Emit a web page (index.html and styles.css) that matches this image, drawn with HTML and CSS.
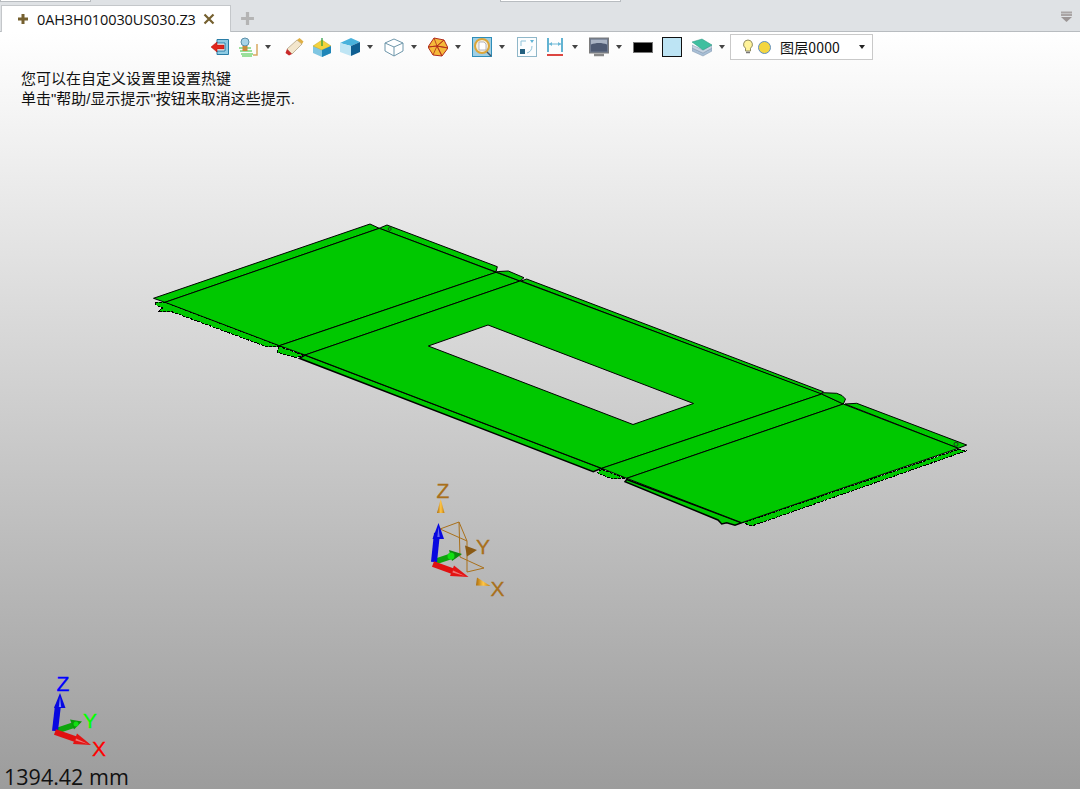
FILE: index.html
```html
<!DOCTYPE html>
<html lang="zh-CN">
<head>
<meta charset="utf-8">
<title>0AH3H010030US030.Z3</title>
<link rel="stylesheet" href="styles.css">
</head>
<body>
<div class="app">
  <header class="tabbar">
    <span class="sliver sliver-a"></span>
    <span class="sliver sliver-b"></span>
    <div class="tab">
      <svg class="tab-glyph" viewBox="0 0 12 12"><path d="M6 1v10M1 6h10" stroke="#75602f" stroke-width="3"/></svg>
      <span class="tab-name">0AH3H010030US030.Z3</span>
      <svg class="tab-glyph" viewBox="0 0 12 12"><path d="M1.5 1.5l9 9M10.500 1.500l-9 9" stroke="#75602f" stroke-width="2.200"/></svg>
    </div>
    <svg class="tab-add" viewBox="0 0 14 14"><path d="M7 1v12M1 7h12" stroke="#b4b4b4" stroke-width="3"/></svg>
    <svg class="tab-menu" viewBox="0 0 12 12"><path d="M0 1.500h11M0 4h11" stroke="#aaa5a5" stroke-width="2"/><path d="M0 6h11L5.500 11z" fill="#9c9696"/></svg>
  </header>

  <main class="viewport">
    <svg class="scene" viewBox="0 32 1080 757">
      <defs>
        <linearGradient id="cone" x1="0" y1="0" x2="1" y2="0"><stop offset="0" stop-color="#a96a0a"/><stop offset=".5" stop-color="#ffc648"/><stop offset="1" stop-color="#c07c10"/></linearGradient>
      </defs>
      <g class="model">
        <polygon points="153.500,298.300 370,224 379.300,228.300 165,302.300"/>
        <polygon points="380.500,227.700 387,225 497.300,266.700 496,272 379.300,228.300"/>
        <polygon class="rough" points="155,302.500 165,302.300 279.300,345.700 278,346.700 266.700,346.700 171.700,311.700 158.300,311.700 162.500,308 156,305"/>
        <polygon points="165,302.300 379.300,228.300 496,272.300 279.300,345.700"/>
        <polygon points="279.300,345.700 496,272.300 520,281 305,355"/>
        <polygon points="496.500,272 498.300,271.500 508.300,271 524,277.700 520,281"/>
        <polygon class="rough" points="279.300,346.500 277.300,352.300 296.700,357.700 303,355"/>
        <polygon points="521,281 526.700,279 823.300,391.700 820.700,394"/>
        <polygon class="thick" points="305,355 601.700,468.300 593.300,471.700 299.300,358.300"/>
        <path class="panel" fill-rule="evenodd" d="M305 355L520 281L821.700 394L601.700 468.300ZM428.300 346L488 325L693.500 403.500L633 424.500Z"/>
        <polygon points="601.700,468.300 821.700,394 843.300,404 626.700,478.300"/>
        <polygon class="rough" points="601.700,469.300 597.300,472.700 611.700,479 625,478.300"/>
        <polygon points="821.700,394 823,392.700 836.700,393.300 842,395.500 845.500,399 843.300,404"/>
        <polygon points="845,404 856.700,403.300 966.700,445 958.300,448.300"/>
        <polygon class="rough" points="958.300,449.500 966.700,450.700 751.700,526 743,522.700"/>
        <polygon class="thick" points="626.700,479.500 625,481.700 718,520 721.700,524 726.700,522.700 735,525.300 741.700,522.700"/>
        <polygon points="626.700,478.300 843.300,404 958.300,448.300 741.700,522.700"/>
        <circle class="pin" cx="389.700" cy="229" r="1.500"/>
        <circle class="pin" cx="956" cy="444.300" r="2"/>
      </g>

      <g class="wire">
        <path d="M440 529L459 522L460 557L484 568L467 572L467 541L440 529M459 522L467 541"/>
      </g>
      <polygon points="440.700,499 437,513 444.500,513" fill="url(#cone)"/>
      <polygon points="477,550 465,545.500 467,556.500" fill="#8a5a14"/>
      <polygon points="490.500,586 477,577.500 476,585.500" fill="url(#cone)"/>
      <g class="axes">
        <path class="axis-y" d="M434 562L452 556"/><polygon points="462,554 449,550 452,561" fill="#0d8a0d"/><circle cx="451" cy="556" r="3.500" fill="#12e012"/>
        <path class="axis-z" d="M434 562L437 533"/><polygon points="438.500,523 432.500,539 444,539" fill="#0808e0"/><polygon points="438.500,527 437.300,537 439.700,537" fill="#6a6af0"/>
        <path class="axis-x" d="M433 564L455 572"/><polygon points="468.500,577 454,565.500 450,576" fill="#e41414"/><polygon points="465,576 453,570.500 452.500,572.500" fill="#f07878"/>
      </g>
      <text class="axis-label gold" x="436.500" y="498">Z</text>
      <text class="axis-label gold" x="476" y="554">Y</text>
      <text class="axis-label gold" x="490.500" y="596">X</text>

      <g class="axes">
        <path class="axis-y" d="M56 731L74 725"/><polygon points="82,721.500 70,719.500 74,729.500" fill="#0a9a0a"/><circle cx="76" cy="724" r="2.500" fill="#12e012"/>
        <path class="axis-z" d="M55 731L58 705"/><polygon points="60,693 54,708 65.500,708" fill="#0808e0"/><polygon points="60,697 58.800,707 61.200,707" fill="#7a8cf2"/>
        <path class="axis-x" d="M55 732L78 740"/><polygon points="91,745 77,733.500 73,744" fill="#e41414"/><polygon points="88,744 76,738.500 75.500,740.500" fill="#f07878"/>
      </g>
      <text class="axis-label blue" x="56.500" y="691">Z</text>
      <text class="axis-label lime" x="83" y="728">Y</text>
      <text class="axis-label red" x="92" y="756">X</text>
    </svg>

    <nav class="toolbar">
      <svg class="ico" viewBox="0 0 20 20"><path d="M7 2.500h11.500v15H7v-3.500h8V6H7z" fill="#8fcbe3" stroke="#2a7da6"/><path d="M1 10l6-5v3h7v4H7v3z" fill="#e1251b" stroke="#a81610" stroke-width=".5"/></svg>
      <svg class="ico" viewBox="0 0 20 20"><circle cx="7" cy="5" r="4" fill="#a7d3e8" stroke="#5b8fa8"/><path d="M1 11h12M2 14h12M3 17h12M4 19h10" stroke="#3bc43b" stroke-width="1.200"/><rect x="4.500" y="9" width="5" height="5" fill="#c98a3c"/><path d="M15 18h4V7" fill="none" stroke="#d9a860" stroke-width="1.500"/></svg>
      <span class="caret caret-tight"></span>
      <svg class="ico sp5" viewBox="0 0 20 20"><path d="M3 12l10-9 5 4-10 10z" fill="#f3e6cc" stroke="#a99a78" stroke-width=".7"/><path d="M13 3l2.500-2 4 3.500L18 7z" fill="#e0b044"/><path d="M3 12l5 5-3 1.500-3.500-2.500z" fill="#c92a2a"/></svg>
      <svg class="ico" viewBox="0 0 20 20"><path d="M10 5l9 4v7l-9 4-9-4V9z" fill="#7fc6e2"/><path d="M10 3l9 6-9 4-9-4z" fill="#f4d23c" stroke="#c9a92a" stroke-width=".5"/><path d="M10 13l9-4v7l-9 4z" fill="#1f86b8"/><path d="M10 9V1" stroke="#1f9a3c" stroke-width="1.200"/></svg>
      <svg class="ico" viewBox="0 0 20 20"><path d="M0 6l11-5 9 4-9 4z" fill="#49b2dc"/><path d="M0 6l11 3v10L0 15z" fill="#bfe5f4"/><path d="M11 9l9-4v10l-9 4z" fill="#0f5f92"/></svg>
      <span class="caret caret-tight"></span>
      <svg class="ico sp3" viewBox="0 0 20 20"><path d="M1 6l9-4 9 4v8l-9 5-9-5z" fill="#fff" stroke="#6f97ab"/><path d="M1 6l9 4 9-4M10 10v9" fill="none" stroke="#6f97ab"/></svg>
      <span class="caret caret-tight"></span>
      <svg class="ico sp3" viewBox="0 0 20 20"><path d="M6 1l10 2 4 8-6 8-9-1-5-8z" fill="#f5b93a" stroke="#b12a1c"/><path d="M6 1l3 8-9 1 9-1 7-6-7 6 11 2-11-2 5 10-5-10-4 9" fill="none" stroke="#b12a1c" stroke-width=".8"/></svg>
      <span class="caret caret-tight"></span>
      <svg class="ico sp3" viewBox="0 0 20 20"><rect x=".5" y=".5" width="19" height="19" fill="#9fcfe4" stroke="#2f8db8"/><circle cx="10" cy="9" r="7" fill="#f3eedd" stroke="#dca63a" stroke-width="2"/><path d="M7 5h5l2 2v6H7z" fill="#fff" stroke="#99a" stroke-width=".7"/><path d="M15 15l4 4" stroke="#456" stroke-width="1.500"/></svg>
      <span class="caret caret-tight"></span>
      <svg class="ico sp4" viewBox="0 0 20 20"><rect x=".5" y=".5" width="19" height="19" fill="#fbfdfe" stroke="#8fb7c9"/><path d="M4 9V4h5" fill="none" stroke="#8fc3da"/><path d="M15 9c0 4-2 6-5 7" fill="none" stroke="#8fc3da"/><rect x="3" y="12" width="5" height="5" fill="#24607f"/><path d="M13 3h4l-2 3z" fill="#5fb3d6"/></svg>
      <svg class="ico" viewBox="0 0 20 20"><path d="M3 1v14M17 1v14" stroke="#2f9ac4" stroke-width="1.500"/><path d="M4 7h12" stroke="#6cb8d6"/><path d="M4 7l3-2v4zM16 7l-3-2v4z" fill="#6cb8d6"/><path d="M2 18h16" stroke="#d8322c" stroke-width="1.800"/></svg>
      <span class="caret caret-tight"></span>
      <svg class="ico sp3" viewBox="0 0 20 20"><rect x=".5" y="1" width="19" height="15" fill="#6f7a8e" stroke="#7c7c7c"/><rect x="2" y="2.500" width="16" height="12" fill="#4e5a72"/><path d="M2 2.500h16v5c-5-2-11-2-16 0z" fill="#aab4c4"/><path d="M5 18h10" stroke="#888" stroke-width="2.500"/></svg>
      <span class="caret caret-tight"></span>
      <span class="swatch swatch-black sp3"></span>
      <span class="swatch swatch-sky"></span>
      <svg class="ico sp2" viewBox="0 0 20 20"><path d="M0 11l11 5 9-5v3l-9 5-11-5z" fill="#a8bfd6" stroke="#7d93aa" stroke-width=".5"/><path d="M0 8l11 5 9-5v3l-9 5-11-5z" fill="#c7d4e2" stroke="#7d93aa" stroke-width=".5"/><path d="M0 5l10-3 10 6-9 5z" fill="#3fbf9f" stroke="#2a9580" stroke-width=".5"/></svg>
      <span class="caret caret-tight"></span>
      <div class="layer-box">
        <svg class="bulb" viewBox="0 0 12 16"><path d="M6 1a4.500 4.500 0 0 0-2.500 8.200V12h5V9.200A4.500 4.500 0 0 0 6 1z" fill="#fff39a" stroke="#8e8a60"/><path d="M4 13.500h4" stroke="#777" stroke-width="1.500"/></svg>
        <span class="sun"></span>
        <span class="layer-name">图层0000</span>
        <span class="caret caret-box"></span>
      </div>
    </nav>

    <p class="hint">您可以在自定义设置里设置热键<br>单击"帮助/显示提示"按钮来取消这些提示.</p>
    <div class="scale">1394.42 mm</div>
  </main>
</div>
</body>
</html>
```
FILE: styles.css
```css
* { box-sizing: border-box; }
html, body { margin: 0; height: 100%; overflow: hidden; }
body { font-family: "Open Sans", "Noto Sans CJK SC", sans-serif; color: #111; background: #fff; }

.app { display: flex; flex-direction: column; width: 1080px; height: 789px; }

.tabbar {
  position: relative;
  display: flex;
  align-items: flex-end;
  flex: 0 0 32px;
  padding-left: 1px;
  background: #dfe2e5;
  border-bottom: 1px solid #b8bcc0;
}
.sliver { position: absolute; top: 0; height: 2px; background: #fff; border: 1px solid #b8bcc0; border-top: 0; }
.sliver-a { left: 0; width: 91px; }
.sliver-b { left: 500px; width: 121px; }

.tab {
  display: flex;
  align-items: center;
  width: 230px;
  height: 27px;
  margin-bottom: -1px;
  padding: 0 15px 0 15px;
  background: #fff;
  border: 1px solid #c4c7ca;
  border-bottom: 0;
}
.tab-glyph { flex: none; width: 12px; height: 12px; }
.tab-name { flex: 1; margin-left: 8px; font-size: 14.5px; letter-spacing: -.1px; white-space: nowrap; }
.tab-add { width: 15px; height: 15px; margin: 0 0 5px 9px; }
.tab-menu { width: 12px; height: 12px; margin: 0 7px 8px auto; }

.viewport {
  position: relative;
  flex: 1;
  background: linear-gradient(#fff, #9c9c9c);
}
.scene { position: absolute; inset: 0; width: 1080px; height: 757px; }

.model polygon, .model path { fill: #00c800; stroke: #000; stroke-width: 1; stroke-linejoin: miter; }
.model .rough { stroke-width: 1; stroke-dasharray: 3 1; shape-rendering: crispEdges; }
.model .thick { stroke-width: 1.500; }
.model .pin { fill: none; stroke: #222; stroke-width: .8; }

.wire path { fill: none; stroke: #a9701b; stroke-width: 1; }
.axes path { fill: none; stroke-width: 6; }
.axis-x { stroke: #e01010; }
.axis-y { stroke: #0ca50c; }
.axis-z { stroke: #0808e0; }

.axis-label { font-family: "Liberation Sans", sans-serif; font-size: 21px; stroke-width: .3px; }
.gold { fill: #a9701b; stroke: #a9701b; }
.blue { fill: #0000ff; stroke: #0000ff; }
.lime { fill: #00ff00; stroke: #00ff00; }
.red { fill: #ff0000; stroke: #ff0000; }

.toolbar {
  position: relative;
  display: flex;
  align-items: center;
  gap: 8px;
  height: 30px;
  padding-left: 210px;
}
.ico { flex: none; width: 20px; height: 20px; }
.sp2 { margin-left: 2px; }
.sp3 { margin-left: 3px; }
.sp4 { margin-left: 4px; }
.sp5 { margin-left: 5px; }

.caret { flex: none; width: 0; height: 0; border: 3px solid transparent; border-top: 4px solid #444; border-bottom: 0; }
.caret-tight { margin-left: -1px; }
.caret-box { margin-left: auto; border-top-color: #222; }

.swatch { flex: none; width: 20px; height: 20px; }
.swatch-black { height: 11px; background: #000; border: 1px solid #777; }
.swatch-sky { margin-left: 1px; background: #bde4f4; border: 1px solid #111; }

.layer-box {
  display: flex;
  align-items: center;
  flex: none;
  width: 143px;
  height: 26px;
  margin-left: -3px;
  padding: 0 7px 0 11px;
  background: #fff;
  border: 1px solid #c9c9c9;
}
.bulb { width: 12px; height: 16px; }
.sun {
  width: 13px;
  height: 13px;
  margin-left: 4px;
  border-radius: 50%;
  background: #f4d640;
  border: 1px solid #5f8fc0;
}
.layer-name { margin-left: 9px; font-size: 14px; letter-spacing: .15px; font-family: "Noto Sans CJK SC", sans-serif; line-height: 1; }

.hint {
  position: relative;
  margin: 0;
  padding: 7px 0 0 21px;
  font-family: "Liberation Sans", "Noto Sans CJK SC", sans-serif;
  font-size: 15px;
  line-height: 20px;
  color: #111;
}

.scale {
  position: absolute;
  left: 4px;
  bottom: 0;
  font-size: 21.5px;
  line-height: 24px;
  color: #111;
}
```
